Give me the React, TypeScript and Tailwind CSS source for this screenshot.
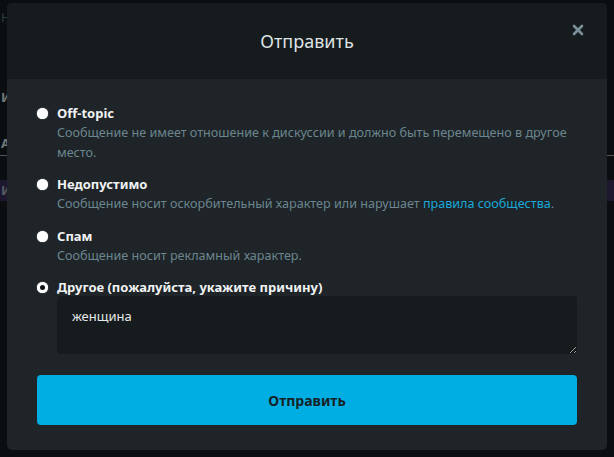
import { useState } from 'react';

interface Reason {
  id: string;
  title: string;
  description?: React.ReactNode;
}

const REASONS: Reason[] = [
  {
    id: 'offtopic',
    title: 'Off-topic',
    description: 'Сообщение не имеет отношение к дискуссии и должно быть перемещено в другое место.',
  },
  {
    id: 'inappropriate',
    title: 'Недопустимо',
    description: (
      <>
        Сообщение носит оскорбительный характер или нарушает{' '}
        <a href="#" className="text-[#19a9da]">правила сообщества</a>.
      </>
    ),
  },
  {
    id: 'spam',
    title: 'Спам',
    description: 'Сообщение носит рекламный характер.',
  },
  {
    id: 'other',
    title: 'Другое (пожалуйста, укажите причину)',
  },
];

function Radio({ checked }: { checked: boolean }) {
  return (
    <span className="mt-[4px] flex h-[11px] w-[11px] shrink-0 items-center justify-center rounded-full bg-white shadow-[0_0_1px_#fff]">
      {checked && <span className="h-[5px] w-[5px] rounded-full bg-[#0f1417]" />}
    </span>
  );
}

export default function App() {
  const [selected, setSelected] = useState('other');
  const [reason, setReason] = useState('женщина');

  return (
    <div
      className="relative h-[457px] w-[614px] overflow-hidden bg-[#0a0e10]"
      style={{ fontFamily: '"Noto Sans", "Open Sans", sans-serif' }}
    >
      {/* page behind the overlay */}
      <div className="flex flex-col text-[13px]">
        <div className="mt-[8px] h-[20px] pl-[1px] text-[#2e3b3d]">Н</div>
        <div className="mt-[60px] h-[20px] pl-[1px] font-bold text-[#6f7778]">И</div>
        <div className="mt-[26px] h-[22px] border-b border-[#555] pl-[1px] font-bold text-[#6f7778]">АЛ</div>
        <div className="mt-[24px] flex h-[21px] items-center bg-[#1d1830] pl-[1px] font-bold text-[#555a5e]">И</div>
      </div>

      {/* modal */}
      <div className="absolute left-[7px] top-[3px] flex h-[447px] w-[600px] flex-col overflow-hidden rounded-[5px] bg-[#1e2427]">
        <div className="relative flex h-[76px] shrink-0 items-center justify-center bg-[#161b1e]">
          <h2 className="text-[18px] text-[#dfe3e4]">Отправить</h2>
          <button className="absolute right-[23px] top-[21px] text-[#7b9098]">
            <svg width="12" height="12" viewBox="0 0 12 12">
              <path d="M2 2 L10 10 M10 2 L2 10" stroke="currentColor" strokeWidth="2.6" strokeLinecap="round" />
            </svg>
          </button>
        </div>

        <div className="flex flex-1 flex-col px-[30px] pt-[25px]">
          <div className="flex flex-col gap-[13px]">
            {REASONS.map((r) => (
              <div key={r.id} className="flex gap-[9px] cursor-pointer" onClick={() => setSelected(r.id)}>
                <Radio checked={selected === r.id} />
                <div className="flex flex-1 flex-col">
                  <span className="text-[13px] font-bold leading-[19px] text-[#f0f2f3]">{r.title}</span>
                  {r.description && (
                    <span className="text-[12.6px] leading-[19.5px] text-[#6c8690]">{r.description}</span>
                  )}
                  {r.id === 'other' && (
                    <textarea
                      value={reason}
                      onChange={(e) => setReason(e.target.value)}
                      className="mt-[-1px] h-[58px] w-[520px] resize-y rounded-[4px] bg-[#161b1e] px-[15px] py-[11px] text-[13px] leading-[19px] text-[#e6e9ea] outline-none"
                    />
                  )}
                </div>
              </div>
            ))}
          </div>

          <button className="mt-[21px] h-[50px] w-[540px] rounded-[4px] bg-[#00aee4] text-[14px] font-bold text-[#172226]">
            Отправить
          </button>
        </div>
      </div>
    </div>
  );
}
